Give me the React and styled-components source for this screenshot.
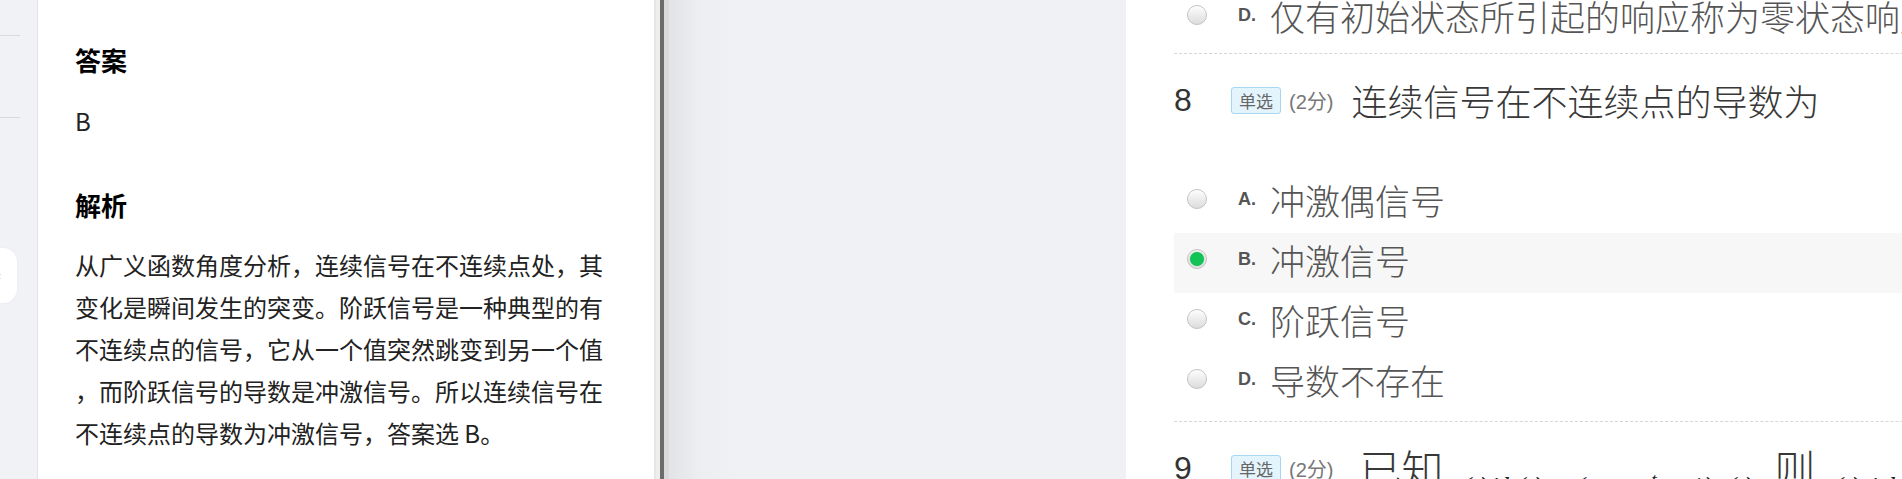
import React from "react";
import styled, { createGlobalStyle } from "styled-components";

const GlobalStyle = createGlobalStyle`
  html, body {
    margin: 0;
    padding: 0;
    background: #fff;
  }
  body {
    font-family: "Noto Sans CJK SC", "Noto Sans", sans-serif;
  }
`;

const Page = styled.div`
  position: relative;
  display: flex;
  width: 1902px;
  height: 479px;
  overflow: hidden;
`;

const Sidebar = styled.aside`
  flex: 0 0 37px;
  background: #f1f2f5;
  border-right: 1px solid #e2e3e6;
  padding-top: 35px;
`;

const SideLine = styled.div`
  width: 20px;
  height: 1px;
  background: #d9dadd;
  margin-bottom: 81px;
`;

const CollapseTab = styled.div`
  position: absolute;
  left: 0;
  top: 248px;
  width: 17px;
  height: 55px;
  background: #fff;
  border-radius: 0 14px 14px 0;
  box-shadow: 0 0 3px rgba(0, 0, 0, 0.04);
  display: flex;
  align-items: center;
  overflow: hidden;

  span {
    margin-left: -3px;
    font-size: 12px;
    color: #aaa;
    font-family: "Liberation Sans", sans-serif;
  }
`;

const AnswerPanel = styled.section`
  flex: 0 0 616px;
  box-sizing: border-box;
  background: #fff;
  padding: 42px 0 0 37px;
`;

const SectionTitle = styled.h3`
  margin: ${({ top }) => top}px 0 0;
  font-size: 26px;
  font-weight: 700;
  line-height: 36px;
  color: #000;
`;

const AnswerValue = styled.div`
  margin-top: 22px;
  font-size: 24px;
  line-height: 42px;
  color: #222;
`;

const Analysis = styled.p`
  margin: 21px 0 0;
  width: 528px;
  font-size: 24px;
  line-height: 42px;
  color: #222;
  line-break: anywhere;
  word-break: break-all;
`;

const Splitter = styled.div`
  flex: 0 0 15px;
  background: linear-gradient(
    to right,
    #e6e6e6 0 2px,
    #eeeeee 2px 6px,
    #6b6b6b 6px 10px,
    #d9d9d9 10px 15px
  );
`;

const Middle = styled.div`
  flex: 1;
  background: linear-gradient(to right, #e2e3e7 0, #eceef2 30px, #f0f1f5 70px);
`;

const QuizPanel = styled.section`
  flex: 0 0 776px;
  box-sizing: border-box;
  background: #fff;
  padding-left: 48px;
  overflow: hidden;
`;

const QuizStack = styled.div`
  margin-top: -11px;
  width: 900px;
`;

const OptionRow = styled.div`
  display: flex;
  align-items: center;
  box-sizing: border-box;
  height: 60px;
  padding: 0 0 8px 13px;
  white-space: nowrap;
  background: ${({ active }) => (active ? "#f7f7f7" : "transparent")};
`;

const Radio = styled.span`
  flex: 0 0 20px;
  width: 20px;
  height: 20px;
  box-sizing: border-box;
  border-radius: 50%;
  border: 1px solid #c2c2c2;
  background: ${({ checked }) =>
    checked
      ? "radial-gradient(circle, #12c356 0 6.5px, #e2e2e2 7.5px)"
      : "linear-gradient(#fdfdfd, #dcdcdc)"};
  box-shadow: inset 0 1px 1px rgba(255, 255, 255, 0.9);
`;

const OptionLetter = styled.span`
  width: 32px;
  margin-left: 31px;
  font-family: "Liberation Sans", sans-serif;
  font-weight: 700;
  font-size: 18px;
  color: #555;
`;

const OptionText = styled.span`
  font-size: 35px;
  font-weight: 300;
  color: #555;
`;

const Divider = styled.div`
  margin-top: ${({ gap }) => gap}px;
  border-top: 1px dashed #d6d6d6;
`;

const QuestionHeader = styled.div`
  display: flex;
  align-items: center;
  height: 92px;
  margin-bottom: 27px;
  white-space: nowrap;
`;

const QNum = styled.span`
  width: 57px;
  font-family: "Liberation Sans", sans-serif;
  font-size: 32px;
  color: #333;
`;

const Tag = styled.span`
  display: flex;
  align-items: center;
  justify-content: center;
  box-sizing: border-box;
  width: 50px;
  height: 27px;
  background: #e4f4fd;
  border: 1px solid #a6d6f2;
  border-radius: 3px;
  font-size: 17px;
  color: #666;
`;

const Score = styled.span`
  margin-left: 8px;
  font-family: "Liberation Sans", "Noto Sans CJK SC", sans-serif;
  font-size: 20px;
  color: #777;
`;

const QTitle = styled.div`
  margin-left: ${({ lead }) => lead}px;
  height: ${({ size }) => Math.round(size * 1.2)}px;
  font-size: ${({ size }) => size}px;
  line-height: 1.2;
  font-weight: 300;
  color: #383838;
`;

const Formula = styled.span`
  margin: 0 6px;
  font-family: "Liberation Serif", serif;
  font-style: italic;
  font-size: 28px;
  color: #222;
  vertical-align: -10px;

  sup {
    font-size: 0.7em;
  }
`;

const Option = ({ letter, text, checked, active }) => (
  <OptionRow active={active}>
    <Radio checked={checked} />
    <OptionLetter>{letter}.</OptionLetter>
    <OptionText>{text}</OptionText>
  </OptionRow>
);

const options = [
  { letter: "A", text: "冲激偶信号" },
  { letter: "B", text: "冲激信号", checked: true, active: true },
  { letter: "C", text: "阶跃信号" },
  { letter: "D", text: "导数不存在" },
];

export default function App() {
  return (
    <>
      <GlobalStyle />
      <Page>
        <Sidebar>
          <SideLine />
          <SideLine />
        </Sidebar>
        <CollapseTab>
          <span>‹</span>
        </CollapseTab>

        <AnswerPanel>
          <SectionTitle top={0}>答案</SectionTitle>
          <AnswerValue>B</AnswerValue>
          <SectionTitle top={45}>解析</SectionTitle>
          <Analysis>
            从广义函数角度分析，连续信号在不连续点处，其变化是瞬间发生的突变。阶跃信号是一种典型的有不连续点的信号，它从一个值突然跳变到另一个值，而阶跃信号的导数是冲激信号。所以连续信号在不连续点的导数为冲激信号，答案选 B。
          </Analysis>
        </AnswerPanel>

        <Splitter />
        <Middle />

        <QuizPanel>
          <QuizStack>
            <Option letter="D" text="仅有初始状态所引起的响应称为零状态响应" />
            <Divider gap={4} />

            <QuestionHeader>
              <QNum>8</QNum>
              <Tag>单选</Tag>
              <Score>(2分)</Score>
              <QTitle lead={18} size={36}>连续信号在不连续点的导数为</QTitle>
            </QuestionHeader>
            {options.map((o) => (
              <Option key={o.letter} {...o} />
            ))}
            <Divider gap={8} />

            <QuestionHeader>
              <QNum>9</QNum>
              <Tag>单选</Tag>
              <Score>(2分)</Score>
              <QTitle lead={26} size={42}>
                已知
                <Formula>
                  x(t)*h(t) = (t + e<sup>−t</sup> − 1)u(t) ,
                </Formula>
                则<Formula>x(t) * h(t)</Formula>
              </QTitle>
            </QuestionHeader>
          </QuizStack>
        </QuizPanel>
      </Page>
    </>
  );
}
